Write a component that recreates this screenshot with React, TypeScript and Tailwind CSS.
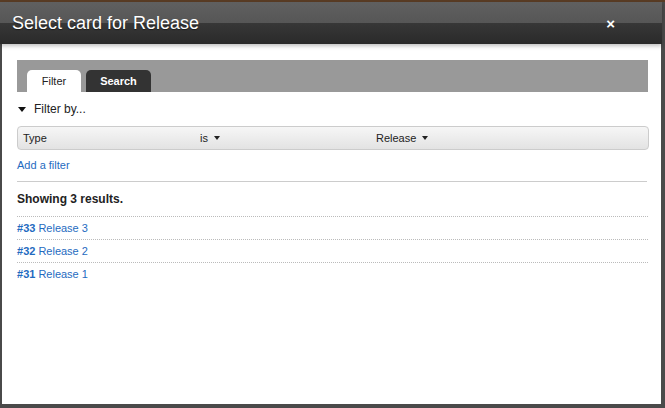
import React from 'react';

const results = [
  { id: 33, name: 'Release 3' },
  { id: 32, name: 'Release 2' },
  { id: 31, name: 'Release 1' },
];

const Caret: React.FC = () => (
  <span className="ml-[6px] inline-block h-0 w-0 border-x-[3px] border-t-[4px] border-x-transparent border-t-[#222] align-middle" />
);

const App: React.FC = () => {
  return (
    <div className="flex h-[408px] w-[665px] flex-col bg-[#4a4a4a] font-['Liberation_Sans',Arial,sans-serif]">
      <div className="h-[2px] bg-[#5a3c24]" />
      <div className="flex w-[662px] flex-col">
        {/* header */}
        <div className="relative flex h-[42px] items-center bg-[linear-gradient(to_bottom,#606060_0%,#565656_50%,#373737_50%,#2a2a2a_100%)] px-[12px] shadow-[0_2px_4px_rgba(0,0,0,0.25)]">
          <h1 className="text-[18px] leading-none text-white [text-shadow:0_1px_1px_rgba(0,0,0,0.5)]">Select card for Release</h1>
          <button className="ml-auto mr-[35px] text-[15px] font-bold leading-none text-white">×</button>
        </div>

        {/* body */}
        <div className="ml-[2px] h-[360px] w-[659px] bg-white px-[15px] pt-[16px] text-[#222]">
          <div className="flex h-[32px] w-[631px] items-end gap-[5px] bg-[#999] px-[10px]">
            <div className="flex h-[22px] w-[54px] items-center justify-center rounded-t-[5px] bg-white text-[11px] text-[#222]">Filter</div>
            <div className="flex h-[22px] w-[65px] items-center justify-center rounded-t-[5px] bg-[#333] text-[11px] font-bold text-white">Search</div>
          </div>

          <div className="mt-[10px] flex items-center text-[12px] leading-[14px]">
            <span className="ml-[1px] mr-[8px] inline-block h-0 w-0 border-x-[4px] border-t-[5px] border-x-transparent border-t-[#111]" />
            Filter by...
          </div>

          <div className="mt-[10px] flex h-[24px] w-[632px] items-center rounded-[4px] border border-[#ccc] bg-[linear-gradient(to_bottom,#f6f6f6,#e3e3e3)] px-[5px] text-[11px] text-[#222]">
            <span className="w-[177px]">Type</span>
            <span className="flex w-[176px] items-center">is<Caret /></span>
            <span className="flex items-center">Release<Caret /></span>
          </div>

          <a className="mt-[8px] block text-[11px] leading-[14px] text-[#1f6bbf]" href="#">Add a filter</a>

          <div className="mt-[9px] h-px w-[630px] bg-[#ccc]" />

          <div className="mt-[10px] text-[12px] font-bold leading-[14px] text-[#222]">Showing 3 results.</div>

          <div className="mt-[10px] w-[631px]">
            {results.map(r => (
              <div key={r.id} className="flex h-[23px] items-center border-t border-dotted border-[#bbb] text-[11px] text-[#1f6bbf]">
                <span className="font-bold">#{r.id}</span>
                <span className="ml-[3px]">{r.name}</span>
              </div>
            ))}
          </div>
        </div>
      </div>
    </div>
  );
};

export default App;
